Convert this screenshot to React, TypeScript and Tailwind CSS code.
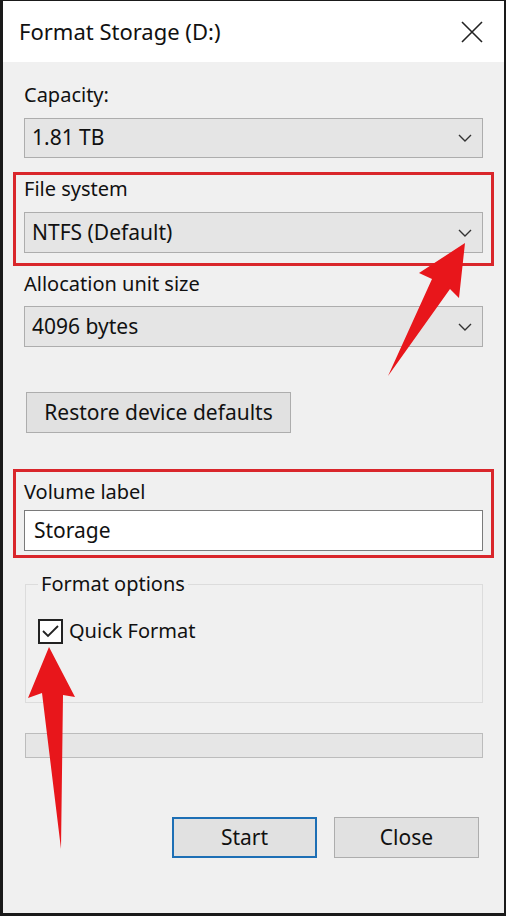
import React from "react";

const font = { fontFamily: '"Noto Sans", "Open Sans", sans-serif' };

const Chevron = () => (
  <svg width="14" height="8" viewBox="0 0 14 8" className="shrink-0">
    <path d="M1 1 L7 7 L13 1" fill="none" stroke="#333" strokeWidth="1.4" />
  </svg>
);

const Dropdown = ({ value }: { value: string }) => (
  <div className="flex h-[41px] items-center justify-between border border-[#adadad] bg-[#e5e5e5] pl-[7px] pr-[10px] text-[21px] text-[#111]">
    <span>{value}</span>
    <Chevron />
  </div>
);

const Label = ({ children }: { children: React.ReactNode }) => (
  <div className="h-[24px] text-[20px] leading-[24px] text-[#111]">{children}</div>
);

const Arrows = () => (
  <svg className="pointer-events-none absolute left-0 top-0" width="506" height="916" viewBox="0 0 506 916">
    {/* arrow to the file system chevron */}
    <path d="M465 243 L459 298 L450 289 L388 376 L432 279 L419 273 Z" fill="#e8161b" />
    {/* arrow to the quick format checkbox */}
    <path d="M49 647 L75 697 L63 695 L61 849 L42 693 L28 698 Z" fill="#e8161b" />
  </svg>
);

export default function App() {
  return (
    <div className="relative h-[916px] w-[506px] overflow-hidden bg-[#1a1a1a]" style={font}>
      <div className="ml-[3px] mt-[1px] flex h-[912px] w-[501px] flex-col">
        <div className="flex h-[61px] items-center justify-between bg-white pl-[16px] pr-[21px]">
          <span className="text-[22px] text-[#111]">Format Storage (D:)</span>
          <svg width="22" height="22" viewBox="0 0 22 22">
            <path d="M1 1 L21 21 M21 1 L1 21" stroke="#222" strokeWidth="1.6" fill="none" />
          </svg>
        </div>

        <div className="flex flex-1 flex-col bg-[#f0f0f0] px-[21px]">
          <div className="mt-[21px]">
            <Label>Capacity:</Label>
          </div>
          <div className="mt-[11px] [&>div]:h-[40px]">
            <Dropdown value="1.81 TB" />
          </div>

          <div className="-mx-[11px] mt-[14px] border-[3px] border-[#d9262b] px-[8px] pb-[10px] pt-[2px]">
            <Label>File system</Label>
            <div className="mt-[11px]">
              <Dropdown value="NTFS (Default)" />
            </div>
          </div>

          <div className="mt-[6px]">
            <Label>Allocation unit size</Label>
          </div>
          <div className="mt-[10px]">
            <Dropdown value="4096 bytes" />
          </div>

          <button className="ml-[2px] mt-[45px] h-[41px] w-[265px] border border-[#adadad] bg-[#e1e1e1] text-[21px] text-[#111]">
            Restore device defaults
          </button>

          <div className="-mx-[11px] mt-[36px] border-[3px] border-[#d9262b] px-[8px] pb-[4px] pt-[8px]">
            <Label>Volume label</Label>
            <div className="mt-[6px] flex h-[41px] items-center border border-[#7a7a7a] bg-white pl-[9px] text-[21px] text-[#111]">
              Storage
            </div>
          </div>

          <fieldset className="ml-[1px] mt-[14px] border border-[#dcdcdc] pb-[56px] pl-[12px]">
            <legend className="h-[24px] px-[3px] text-[20px] leading-[24px] text-[#111]">Format options</legend>
            <label className="mt-[20px] flex items-center gap-[6px] text-[20px] text-[#111]">
              <span className="flex h-[25px] w-[25px] items-center justify-center border-2 border-[#222] bg-white">
                <svg width="17" height="13" viewBox="0 0 17 13">
                  <path d="M1 6 L6 11 L16 1" fill="none" stroke="#222" strokeWidth="1.8" />
                </svg>
              </span>
              Quick Format
            </label>
          </fieldset>

          <div className="ml-[1px] mt-[30px] h-[25px] border border-[#bcbcbc] bg-[#e6e6e6]" />

          <div className="mt-[59px] flex justify-end gap-[17px] pr-[4px]">
            <button className="h-[41px] w-[145px] border-2 border-[#1d6fb5] bg-[#e1e1e1] text-[21px] text-[#111]">Start</button>
            <button className="h-[41px] w-[145px] border border-[#adadad] bg-[#e1e1e1] text-[21px] text-[#111]">Close</button>
          </div>
        </div>
      </div>
      <Arrows />
    </div>
  );
}
